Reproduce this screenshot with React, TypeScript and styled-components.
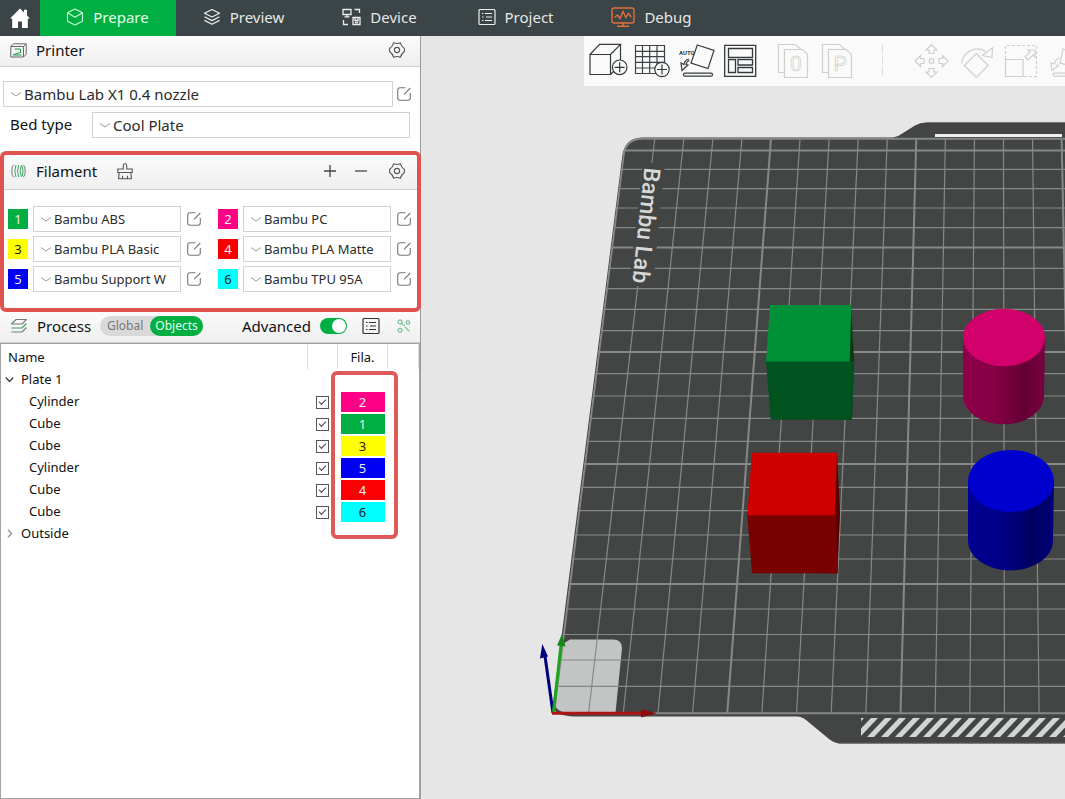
import React from 'react';
import styled, { createGlobalStyle } from 'styled-components';

const GlobalStyle = createGlobalStyle`
  *, *::before, *::after { box-sizing: border-box; }
  body { margin: 0; font-family: 'Noto Sans', 'Open Sans', sans-serif; color: #1c1c1c; }
  button, select, input { font: inherit; color: inherit; margin: 0; }
`;

const line = '#3b4446';
const green = '#00ae42';

const Page = styled.div`
  display: flex;
  flex-direction: column;
  min-height: 100vh;
  overflow: hidden;
`;

const TopBar = styled.nav`
  display: flex;
  height: 36px;
  background: #3b4446;
`;

const HomeButton = styled.button`
  display: grid;
  place-items: center;
  width: 40px;
  border: 0;
  padding: 0;
  background: none;
`;

const Tab = styled.button<{ $active?: boolean }>`
  display: flex;
  align-items: center;
  justify-content: center;
  gap: 9px;
  width: 136px;
  border: 0;
  padding: 0 1px 2px 0;
  font-size: 15px;
  line-height: 20px;
  color: ${(p) => (p.$active ? '#e4ffec' : '#e6e8e8')};
  background: ${(p) => (p.$active ? green : 'none')};
`;

const Workspace = styled.main`
  display: flex;
  flex: 1;
`;

const Sidebar = styled.aside`
  display: flex;
  flex-direction: column;
  flex: none;
  width: 421px;
  border-right: 1px solid #9a9d9d;
  background: #fff;
`;

const PanelHeader = styled.header<{ $height: number; $right?: number }>`
  display: flex;
  align-items: center;
  height: ${(p) => p.$height}px;
  padding: 0 ${(p) => p.$right ?? 14}px 2px 10px;
  border-bottom: 1px solid #d0d0d0;
  background: linear-gradient(#fbfbfb, #efefef);
`;

const Title = styled.h2`
  margin: 0 0 0 9px;
  font-size: 15px;
  font-weight: 400;
  line-height: 20px;
  color: #111;
`;

const Spacer = styled.div`
  flex: 1;
`;

const IconButton = styled.button<{ $left?: number }>`
  display: grid;
  place-items: center;
  flex: none;
  border: 0;
  padding: 0;
  margin-left: ${(p) => p.$left ?? 0}px;
  background: none;
`;

const PrinterBody = styled.div`
  display: flex;
  flex-direction: column;
  gap: 5px;
  padding: 14px 9px 17px 3px;
`;

const FieldRow = styled.div<{ $indent?: boolean }>`
  display: flex;
  align-items: center;
  padding: ${(p) => (p.$indent ? '0 1px 0 7px' : 0)};
`;

const BedLabel = styled.label`
  width: 82px;
  padding-bottom: 2px;
  font-size: 15px;
  line-height: 20px;
  color: #111;
`;

const SelectBox = styled.span`
  display: grid;
  flex: 1;
  align-items: center;
  min-width: 0;
  & > * { grid-area: 1 / 1; }
  & > svg { margin-left: 8px; pointer-events: none; }
`;

const Select = styled.select<{ $size: number }>`
  appearance: none;
  width: 100%;
  height: 26px;
  padding: 0 0 1px 20px;
  border: 1px solid #d2d2d2;
  border-radius: 0;
  background: #fff;
  font-size: ${(p) => p.$size}px;
  color: #2b2b2b;
`;

const FilamentSection = styled.section`
  position: relative;
  padding-bottom: 19px;
`;

const RedFrame = styled.div`
  position: absolute;
  inset: -4px -1px -1px 0;
  border: 4px solid #e0534f;
  border-radius: 6px;
  pointer-events: none;
`;

const FilamentGrid = styled.div`
  display: grid;
  grid-template-columns: 1fr 1fr;
  gap: 4px 17px;
  padding: 16px 9px 0 8px;
`;

const FilamentItem = styled.div`
  display: flex;
  align-items: center;
`;

const Swatch = styled.label<{ $bg: string; $dark?: boolean }>`
  width: 20px;
  height: 20px;
  margin-right: 5px;
  background: ${(p) => p.$bg};
  color: ${(p) => (p.$dark ? '#222' : '#eee')};
  font-size: 13px;
  line-height: 20px;
  text-align: center;
`;

const Pill = styled.div`
  display: flex;
  height: 20px;
  margin-left: 9px;
  border-radius: 10px;
  background: #d9d9d9;
`;

const PillButton = styled.button<{ $on?: boolean }>`
  width: ${(p) => (p.$on ? 53 : 50)}px;
  border: 0;
  border-radius: 10px;
  padding: 0;
  background: ${(p) => (p.$on ? green : 'none')};
  color: ${(p) => (p.$on ? '#e4ffec' : '#777')};
  font-size: 12px;
  line-height: 20px;
`;

const AdvancedLabel = styled.label`
  font-size: 15px;
  line-height: 20px;
  color: #111;
`;

const Toggle = styled.input`
  appearance: none;
  display: flex;
  justify-content: flex-end;
  width: 27px;
  height: 16px;
  margin-left: 9px;
  border-radius: 8px;
  padding: 1px;
  background: ${green};
  &::after {
    content: '';
    width: 14px;
    height: 14px;
    border-radius: 7px;
    background: #fff;
  }
`;

const TreePanel = styled.section`
  position: relative;
  flex: 1;
  border: 1px solid #a3a3a3;
`;

const Tree = styled.table`
  width: 100%;
  table-layout: fixed;
  border-collapse: collapse;
  font-size: 13px;
  line-height: 20px;
  color: #111;
  td, th { padding: 0; height: 22px; font-weight: 400; text-align: left; }
  th { height: 25px; border-right: 1px solid #dcdcdc; }
  th:first-child { padding-left: 7px; }
  th:nth-child(3) { text-align: center; }
`;

const TreeHead = styled.th<{ $w?: number }>`
  width: ${(p) => (p.$w ? `${p.$w}px` : 'auto')};
`;

const NodeCell = styled.div<{ $leaf?: boolean }>`
  display: flex;
  align-items: center;
  gap: 7px;
  padding: 0 0 2px ${(p) => (p.$leaf ? 28 : 4)}px;
`;

const Check = styled.input`
  appearance: none;
  display: grid;
  place-items: center;
  width: 13px;
  height: 13px;
  margin-left: 8px;
  border: 1px solid #555;
  background: #fff;
  &::after {
    content: '';
    width: 7px;
    height: 4px;
    border: solid #444;
    border-width: 0 0 1px 1px;
    transform: translateY(-1px) rotate(-45deg);
  }
`;

const FilaCell = styled.div<{ $bg: string; $dark?: boolean }>`
  width: 44px;
  height: 20px;
  margin-left: 3px;
  background: ${(p) => p.$bg};
  color: ${(p) => (p.$dark ? '#222' : '#eee')};
  text-align: center;
`;

const ColumnFrame = styled.div`
  position: absolute;
  top: 27px;
  right: 21px;
  width: 67px;
  height: 168px;
  border: 4px solid #dc5a59;
  border-radius: 6px;
  pointer-events: none;
`;

const Canvas = styled.section`
  position: relative;
  flex: 1;
  min-width: 0;
  overflow: hidden;
  background: #e6e6e6;
`;

const Scene = styled.svg`
  position: absolute;
  inset: 0;
  width: 100%;
  height: 100%;
`;

const Toolbar = styled.div`
  position: relative;
  display: flex;
  height: 50px;
  margin-left: 163px;
  padding-left: 2px;
  overflow: hidden;
  background: #fafafa;
`;

const Tool = styled.button<{ $gap?: number }>`
  flex: none;
  width: 44px;
  margin-left: ${(p) => p.$gap ?? 0}px;
  border: 0;
  padding: 0;
  background: none;
  & > svg { display: block; }
`;

const Divider = styled.div`
  flex: none;
  width: 1px;
  height: 32px;
  margin: 9px 26px 0 23px;
  background: repeating-linear-gradient(#dedede 0 8px, #f4f4f4 8px 11px);
`;

/* ---------- icons ---------- */

const Chevron = () => (
  <svg width="10" height="5" viewBox="0 0 10 5" fill="none" stroke="#9a9a9a">
    <path d="M0 .5L5 4 10 .5" />
  </svg>
);

const EditIcon = () => (
  <svg width="14" height="14" viewBox="0 0 14 14" fill="none" stroke="#777" strokeWidth="1.1">
    <path d="M8.5.7H3A2.4 2.4 0 0 0 .7 3v8A2.4 2.4 0 0 0 3 13.300h8A2.4 2.4 0 0 0 13.300 11V6M7 7.300L13.300 1" />
  </svg>
);

const GearIcon = () => (
  <svg width="18" height="18" viewBox="0 0 18 18" fill="none" stroke="#555" strokeWidth="1.1">
    <path d="M5.600 1.800Q9 3.200 12.400 1.800Q13.200 5.200 16.400 7.500V10.500Q13.200 12.800 12.400 16.200Q9 14.800 5.600 16.200Q4.800 12.800 1.600 10.500V7.500Q4.800 5.200 5.600 1.800Z" strokeLinejoin="round" />
    <circle cx="9" cy="9" r="2.600" />
  </svg>
);

const HomeIcon = () => (
  <svg width="20" height="20" viewBox="0 0 20 20" fill="#fff">
    <path d="M10 .5L0 10.500h2.200V20H8v-6.500h4V20h5.800v-9.500H20L17 7.400V1.800h-3v2.700z" />
  </svg>
);

const PrepareIcon = () => (
  <svg width="18" height="18" viewBox="0 0 18 18" fill="none" stroke="#c8ffd8" strokeWidth="1.1" strokeLinejoin="round">
    <path d="M9 1l7.500 3.800v8.400L9 17l-7.500-3.800V4.800zM1.500 4.800L9 9.300l7.500-4.500" />
  </svg>
);

const PreviewIcon = () => (
  <svg width="18" height="18" viewBox="0 0 18 18" fill="none" stroke="#eee" strokeWidth="1.2" strokeLinejoin="round">
    <path d="M9 1.500l7.500 3.700L9 9 1.500 5.200zM1.500 8.800L9 12.600l7.500-3.800M1.500 12.400L9 16.300l7.500-3.900" />
  </svg>
);

const DeviceIcon = () => (
  <svg width="19" height="18" viewBox="0 0 19 18" fill="none" stroke="#eee" strokeWidth="1.3">
    <path d="M1 1.500h8v5H1zM5 6.500v2M2.500 8.800h5M12.500 1.500h5V5M1.500 12v4.500H6M11 9.500h7v7h-7zM13 9.500v3h3v-3M13 14.500h3" />
  </svg>
);

const ListIcon = ({ color }: { color: string }) => (
  <svg width="18" height="18" viewBox="0 0 18 18" fill="none" stroke={color} strokeWidth="1.2">
    <rect x="1" y="1.500" width="16" height="15" rx="1" />
    <path d="M4 5.500h1.500M7 5.500h7M4 9h1.500M8 9h6M4 12.500h1.500M7 12.500h7" />
  </svg>
);

const DebugIcon = () => (
  <svg width="24" height="20" viewBox="0 0 24 20" fill="none" stroke="#e0713a" strokeWidth="1.400">
    <rect x="1" y="1" width="22" height="15" rx="2" />
    <path d="M3.500 10.500L6.500 8l2.500 3.500L12 4.500l2.800 6 2.500-4 3 3.500M12 16v3M6 19.200h12" />
  </svg>
);

const PrinterIcon = () => (
  <svg width="17" height="15" viewBox="0 0 17 15" fill="none" stroke="#666">
    <path d="M.8 3.500L3.500.8h12.700v10.500L13.500 14H.8zM.8 3.500h12.700V14M13.500 3.500L16 1" />
    <path d="M4.500 6h6v3.500M3 12h8.500M3.500 11.500L10.500 9.500" stroke="#1f9a4c" />
  </svg>
);

const SpoolIcon = () => (
  <svg width="17" height="14" viewBox="0 0 17 14" fill="none" stroke="#777">
    <path d="M3.800.8Q1.800 1.500 1.800 7t2 6.200M13.200.8q2 .7 2 6.200t-2 6.200" />
    <path d="M6 1Q3.600 7 6 13M8.700 1Q6.300 7 8.700 13M11.400 1Q9 7 11.400 13M12.400 2q1.200 5 0 10" stroke="#3aa661" />
  </svg>
);

const BroomIcon = () => (
  <svg width="16" height="17" viewBox="0 0 16 17" fill="none" stroke="#555" strokeWidth="1.100">
    <path d="M6.300 6V2.500q0-1.700 1.700-1.700t1.700 1.700V6h5.500v3.500H.8V6zM2.200 9.500L1.500 15.800h13l-.7-6.300M5.500 15.800v-3M10.500 15.800v-3" />
  </svg>
);

const LayersIcon = () => (
  <svg width="18" height="16" viewBox="0 0 18 16" fill="none" stroke="#6f7f76" strokeWidth="1.100" strokeLinejoin="round">
    <path d="M6 1.500h10.500L12 6H1.500z" />
    <path d="M16.500 5.500L12 10H1.500" stroke="#3f9a61" />
    <path d="M16.500 9.500L12 14H1.500" />
  </svg>
);

const NodesIcon = () => (
  <svg width="14" height="14" viewBox="0 0 14 14" fill="none" stroke="#7cc796" strokeWidth="1.300">
    <circle cx="3" cy="3" r="2" />
    <circle cx="11" cy="3.500" r="1.700" />
    <circle cx="3" cy="11.300" r="1.900" />
    <path d="M7 6.500h1M8 8l4.500 4.500M5 5l1.500 1.500" />
  </svg>
);

const Arrow = ({ open }: { open: boolean }) => (
  <svg width="9" height="9" viewBox="0 0 9 9" fill="none" stroke={open ? '#444' : '#999'} strokeWidth="1.500">
    <path d={open ? 'M.8 2.500l3.700 4 3.700-4' : 'M3 .8l3.500 3.700L3 8.200'} />
  </svg>
);

const ToolIcon = ({ x, faint, children }: { x: number; faint?: boolean; children: React.ReactNode }) => (
  <svg width="44" height="50" viewBox={`${x} 36 44 50`} fill="none" stroke={faint ? '#cfcfcf' : '#333a3c'} strokeWidth="1.200">
    {children}
  </svg>
);

const PageShape = ({ letter }: { letter: string }) => (
  <>
    <path d="M784.500 72.500h-6v-28h17l5.500 5" />
    <path d="M784.500 49.500h18l5 5v23h-23z" fill="#fafafa" />
    <text x="796" y="71" textAnchor="middle" fontFamily="Roboto, sans-serif" fontSize="21" fontWeight="400" strokeWidth=".7">
      {letter}
    </text>
  </>
);

/* ---------- scene ---------- */

const rowLines = [
  150.500, 169.300, 188.700, 208, 227.700, 247.500, 268.300, 288.700, 309.300, 330.700, 352, 373.700, 396, 418.300, 441.300,
  464, 487.300, 510.700, 535, 559, 584, 609, 634.500, 660, 686.300,
];
const columnLines = Array.from({ length: 60 }, (_, i) => i);
const hatches = Array.from({ length: 60 }, (_, i) => 839 + i * 14);

const PlateScene = () => (
  <Scene aria-label="Build plate">
    <defs>
      <linearGradient id="magentaSide">
        <stop offset="0" stopColor="#8f004a" />
        <stop offset=".4" stopColor="#850045" />
        <stop offset=".75" stopColor="#640034" />
        <stop offset="1" stopColor="#7a0040" />
      </linearGradient>
      <linearGradient id="blueSide">
        <stop offset="0" stopColor="#000092" />
        <stop offset=".4" stopColor="#000086" />
        <stop offset=".75" stopColor="#000060" />
        <stop offset="1" stopColor="#000078" />
      </linearGradient>
      <clipPath id="plateClip">
        <path d="M642 138H3000V714H570Q553 714 554 704L622.500 158Q625 138 642 138Z" />
      </clipPath>
      <clipPath id="hatchClip">
        <rect x="861" y="718" width="2000" height="19" />
      </clipPath>
    </defs>
    <g transform="translate(-421 -36)">
      <path
        d="M642 137.500H893Q898 137 903 133L915 125.500Q920 122.500 926 122.500H3000V743.500H840Q834 743 829 739L806 720Q802 716.500 797 716.500H575Q552 716 553 704L622 158Q624 138 642 137.500Z"
        fill="#434544"
      />
      <path d="M926 122.500H3000M838 743.300H3000" stroke="#777" fill="none" />
      <rect x="935" y="134" width="127" height="3" fill="#eee" />
      <path d="M570 639.500H613Q622 639.500 622 648L615.500 713H572Q553 713 555 700L561 645Z" fill="#c2c5c4" />
      <g clipPath="url(#plateClip)" stroke="#868987">
        {rowLines.map((y, i) => (
          <path key={y} d={`M540 ${y}H3000`} strokeWidth={i % 5 === 0 ? 2 : 1.200} />
        ))}
        {columnLines.map((n) => (
          <path
            key={n}
            d={`M${625.700 + 29.060 * n} 138.500L${554 + 34.650 * n} 713`}
            strokeWidth={n % 5 === 0 ? 2 : 1.200}
          />
        ))}
      </g>
      <path d="M623 156Q626 138.700 642 138.700H3000M572 713.300H3000" stroke="#858886" strokeWidth="2" fill="none" />
      <path d="M643 163H665L653 286H629Z" fill="#434544" />
      <text
        transform="translate(644.500 167) rotate(96)"
        fontFamily="Roboto, sans-serif"
        fontSize="23"
        fontWeight="500"
        fill="#d6d8d7"
      >
        Bambu Lab
      </text>
      <g clipPath="url(#hatchClip)" fill="#d2d5d4">
        {hatches.map((x) => (
          <path key={x} d={`M${x} 737h7l18-19h-7z`} />
        ))}
      </g>

      <path d="M851 305L854 361 852 419.700H840V340Z" fill="#003a15" />
      <path d="M766 361H850L854 361 852 419.700H770.700Z" fill="#00521e" />
      <path d="M770 305H851.300L849.700 361.500H766Z" fill="#009037" />

      <path d="M837 453L840 512 837.300 573.300H820V500Z" fill="#5a0000" />
      <path d="M747.300 515H835L838 573.300H752Z" fill="#780000" />
      <path d="M752 452.700H837L834.700 515.300H747.300Z" fill="#cf0000" />

      <path d="M963 337V396A40.500 28.300 0 0 0 1044 396L1045 337Z" fill="url(#magentaSide)" />
      <ellipse cx="1004" cy="337.500" rx="41" ry="28.700" fill="#d1006b" />
      <path d="M968 481V541A42.500 29.500 0 0 0 1053 541L1054 481Z" fill="url(#blueSide)" />
      <ellipse cx="1011" cy="481" rx="43" ry="31" fill="#0000cf" />

      <path d="M553 713L545 656" stroke="#00007e" strokeWidth="3" />
      <path d="M542.300 644L548 656.500 540 658.500Z" fill="#00007e" />
      <path d="M553.500 712L561 645" stroke="#1ea321" strokeWidth="3" />
      <path d="M562 634L565.500 646.500 557 645.500Z" fill="#178a1a" />
      <path d="M552 713.300H642" stroke="#b01313" strokeWidth="3" />
      <path d="M657 713.300L641 709V717.500Z" fill="#8f0e0e" />
    </g>
  </Scene>
);

/* ---------- data ---------- */

const filaments = [
  { id: 1, name: 'Bambu ABS', color: '#00ae42' },
  { id: 2, name: 'Bambu PC', color: '#ff0086' },
  { id: 3, name: 'Bambu PLA Basic', color: '#ffff00', dark: true },
  { id: 4, name: 'Bambu PLA Matte', color: '#fb0000' },
  { id: 5, name: 'Bambu Support W', color: '#0000f2' },
  { id: 6, name: 'Bambu TPU 95A', color: '#00ffff', dark: true },
];

const objects = [
  { name: 'Cylinder', fila: 2 },
  { name: 'Cube', fila: 1 },
  { name: 'Cube', fila: 3 },
  { name: 'Cylinder', fila: 5 },
  { name: 'Cube', fila: 4 },
  { name: 'Cube', fila: 6 },
];

export default function App() {
  return (
    <Page>
      <GlobalStyle />
      <TopBar>
        <HomeButton aria-label="Home"><HomeIcon /></HomeButton>
        <Tab $active><PrepareIcon />Prepare</Tab>
        <Tab><PreviewIcon />Preview</Tab>
        <Tab><DeviceIcon />Device</Tab>
        <Tab><ListIcon color="#eee" />Project</Tab>
        <Tab><DebugIcon />Debug</Tab>
      </TopBar>
      <Workspace>
        <Sidebar>
          <section>
            <PanelHeader $height={31}>
              <PrinterIcon />
              <Title>Printer</Title>
              <Spacer />
              <IconButton aria-label="Printer settings"><GearIcon /></IconButton>
            </PanelHeader>
            <PrinterBody>
              <FieldRow>
                <SelectBox>
                  <Select $size={15} aria-label="Printer preset"><option>Bambu Lab X1 0.4 nozzle</option></Select>
                  <Chevron />
                </SelectBox>
                <IconButton $left={4} aria-label="Edit printer"><EditIcon /></IconButton>
              </FieldRow>
              <FieldRow $indent>
                <BedLabel htmlFor="bed">Bed type</BedLabel>
                <SelectBox>
                  <Select $size={15} id="bed"><option>Cool Plate</option></Select>
                  <Chevron />
                </SelectBox>
              </FieldRow>
            </PrinterBody>
          </section>

          <FilamentSection>
            <PanelHeader $height={35}>
              <SpoolIcon />
              <Title>Filament</Title>
              <IconButton $left={20} aria-label="Flushing volumes"><BroomIcon /></IconButton>
              <Spacer />
              <IconButton aria-label="Add filament">
                <svg width="12" height="12" viewBox="0 0 12 12" stroke="#444" strokeWidth="1.300"><path d="M6 0v12M0 6h12" /></svg>
              </IconButton>
              <IconButton $left={19} aria-label="Remove filament">
                <svg width="12" height="12" viewBox="0 0 12 12" stroke="#444" strokeWidth="1.300"><path d="M0 6h12" /></svg>
              </IconButton>
              <IconButton $left={21} aria-label="Filament settings"><GearIcon /></IconButton>
            </PanelHeader>
            <FilamentGrid>
              {filaments.map((f) => (
                <FilamentItem key={f.id}>
                  <Swatch htmlFor={`filament-${f.id}`} $bg={f.color} $dark={f.dark}>{f.id}</Swatch>
                  <SelectBox>
                    <Select $size={13} id={`filament-${f.id}`}><option>{f.name}</option></Select>
                    <Chevron />
                  </SelectBox>
                  <IconButton $left={6} aria-label={`Edit ${f.name}`}><EditIcon /></IconButton>
                </FilamentItem>
              ))}
            </FilamentGrid>
            <RedFrame />
          </FilamentSection>

          <PanelHeader $height={32} $right={9}>
            <LayersIcon />
            <Title>Process</Title>
            <Pill>
              <PillButton>Global</PillButton>
              <PillButton $on>Objects</PillButton>
            </Pill>
            <Spacer />
            <AdvancedLabel htmlFor="advanced">Advanced</AdvancedLabel>
            <Toggle id="advanced" type="checkbox" role="switch" defaultChecked />
            <IconButton $left={15} aria-label="Parameter list"><ListIcon color="#333" /></IconButton>
            <IconButton $left={17} aria-label="Compare presets"><NodesIcon /></IconButton>
          </PanelHeader>

          <TreePanel>
            <Tree>
              <thead>
                <tr>
                  <TreeHead>Name</TreeHead>
                  <TreeHead $w={30} aria-label="Printable" />
                  <TreeHead $w={50}>Fila.</TreeHead>
                  <TreeHead $w={31} aria-label="Settings" />
                </tr>
              </thead>
              <tbody>
                <tr>
                  <td colSpan={4}><NodeCell><Arrow open />Plate 1</NodeCell></td>
                </tr>
                {objects.map((o, i) => {
                  const f = filaments[o.fila - 1];
                  return (
                    <tr key={i}>
                      <td><NodeCell $leaf>{o.name}</NodeCell></td>
                      <td><Check type="checkbox" defaultChecked aria-label={`Print ${o.name}`} /></td>
                      <td><FilaCell $bg={f.color} $dark={f.dark}>{o.fila}</FilaCell></td>
                      <td />
                    </tr>
                  );
                })}
                <tr>
                  <td colSpan={4}><NodeCell><Arrow open={false} />Outside</NodeCell></td>
                </tr>
              </tbody>
            </Tree>
            <ColumnFrame />
          </TreePanel>
        </Sidebar>

        <Canvas>
          <PlateScene />
          <Toolbar>
            <Tool aria-label="Add object">
              <ToolIcon x={586}>
                <path d="M590 54.500h20.500v20H590zM590 54.500l9.500-10.200h21L610.500 54.500M620.500 44.300V60M610.500 74.500l3.500-3.500" />
                <circle cx="619.700" cy="67.300" r="7.300" fill="#fafafa" />
                <path d="M614.700 67.300h10M619.700 62.300v10" />
              </ToolIcon>
            </Tool>
            <Tool aria-label="Add plate">
              <ToolIcon x={630}>
                <path d="M635.500 45.500h29v28h-29zM642.500 45.500v28M649.700 45.500v28M657 45.500v28M635.500 51.300h29M635.500 56.700h29M635.500 62.300h29M635.500 68h29" stroke={line} />
                <circle cx="662" cy="69.500" r="7.200" fill="#fafafa" />
                <path d="M657 69.500h10M662 64.500v10" />
              </ToolIcon>
            </Tool>
            <Tool aria-label="Auto orient">
              <ToolIcon x={674}>
                <text x="679" y="55" fontFamily="Roboto, sans-serif" fontSize="6" fontWeight="700" fill="#333a3c" stroke="none">AUTO</text>
                <path d="M697.300 45l16.700 5.500-6 18-17-5.500zM689 59q-4.500 1-5 5.500l-3-1.500 1 7.500 6-5.500-2-.5q.5-3 3.500-4" />
                <rect x="683.500" y="73.200" width="29" height="3" rx="1.500" />
              </ToolIcon>
            </Tool>
            <Tool aria-label="Arrange">
              <ToolIcon x={718}>
                <path d="M724.700 45.300h31v31h-31zM728.500 48.500h24v9h-24zM728.500 59.700h7v12.800h-7zM738 59.700h14.500v5.300H738zM738 67.500h14.500v5H738z" strokeWidth="1.300" />
              </ToolIcon>
            </Tool>
            <Tool $gap={9} disabled aria-label="Split to objects">
              <ToolIcon x={771} faint><PageShape letter="0" /></ToolIcon>
            </Tool>
            <Tool disabled aria-label="Split to parts">
              <ToolIcon x={771} faint><PageShape letter="P" /></ToolIcon>
            </Tool>
            <Divider />
            <Tool disabled aria-label="Move">
              <ToolIcon x={909} faint>
                {[0, 90, 180, 270].map((a) => (
                  <path key={a} transform={`rotate(${a} 931.500 61)`} d="M931.500 44.500l5.500 5.500h-3v3.500h-5V50h-3z" />
                ))}
                <rect x="929.500" y="59" width="4" height="4" />
              </ToolIcon>
            </Tool>
            <Tool disabled aria-label="Rotate">
              <ToolIcon x={953} faint>
                <path d="M976.300 53.500l12 12-12 12-12-12zM961.500 63.500A16 16 0 0 1 986 51.500M982.500 55.500l9.500 2 .5-9.500-3.500 2.500z" />
              </ToolIcon>
            </Tool>
            <Tool $gap={1} disabled aria-label="Scale">
              <ToolIcon x={998} faint>
                <path d="M1005.500 59V45.500h31v31H1023" strokeDasharray="3 2" />
                <path d="M1005.500 59.500h17.500v17h-17.500zM1025 57l5-5-2-2h7v7l-2-2-5 5z" />
              </ToolIcon>
            </Tool>
            <Tool disabled aria-label="Lay on face">
              <ToolIcon x={1042} faint>
                <path d="M1063 49l12 5-4 12-11-3zM1059 58q-4 2-4.500 6l-3.500-1 1 7.500 6.500-5-2-1" />
                <rect x="1053" y="73.200" width="29" height="3" rx="1.500" />
              </ToolIcon>
            </Tool>
          </Toolbar>
        </Canvas>
      </Workspace>
    </Page>
  );
}
